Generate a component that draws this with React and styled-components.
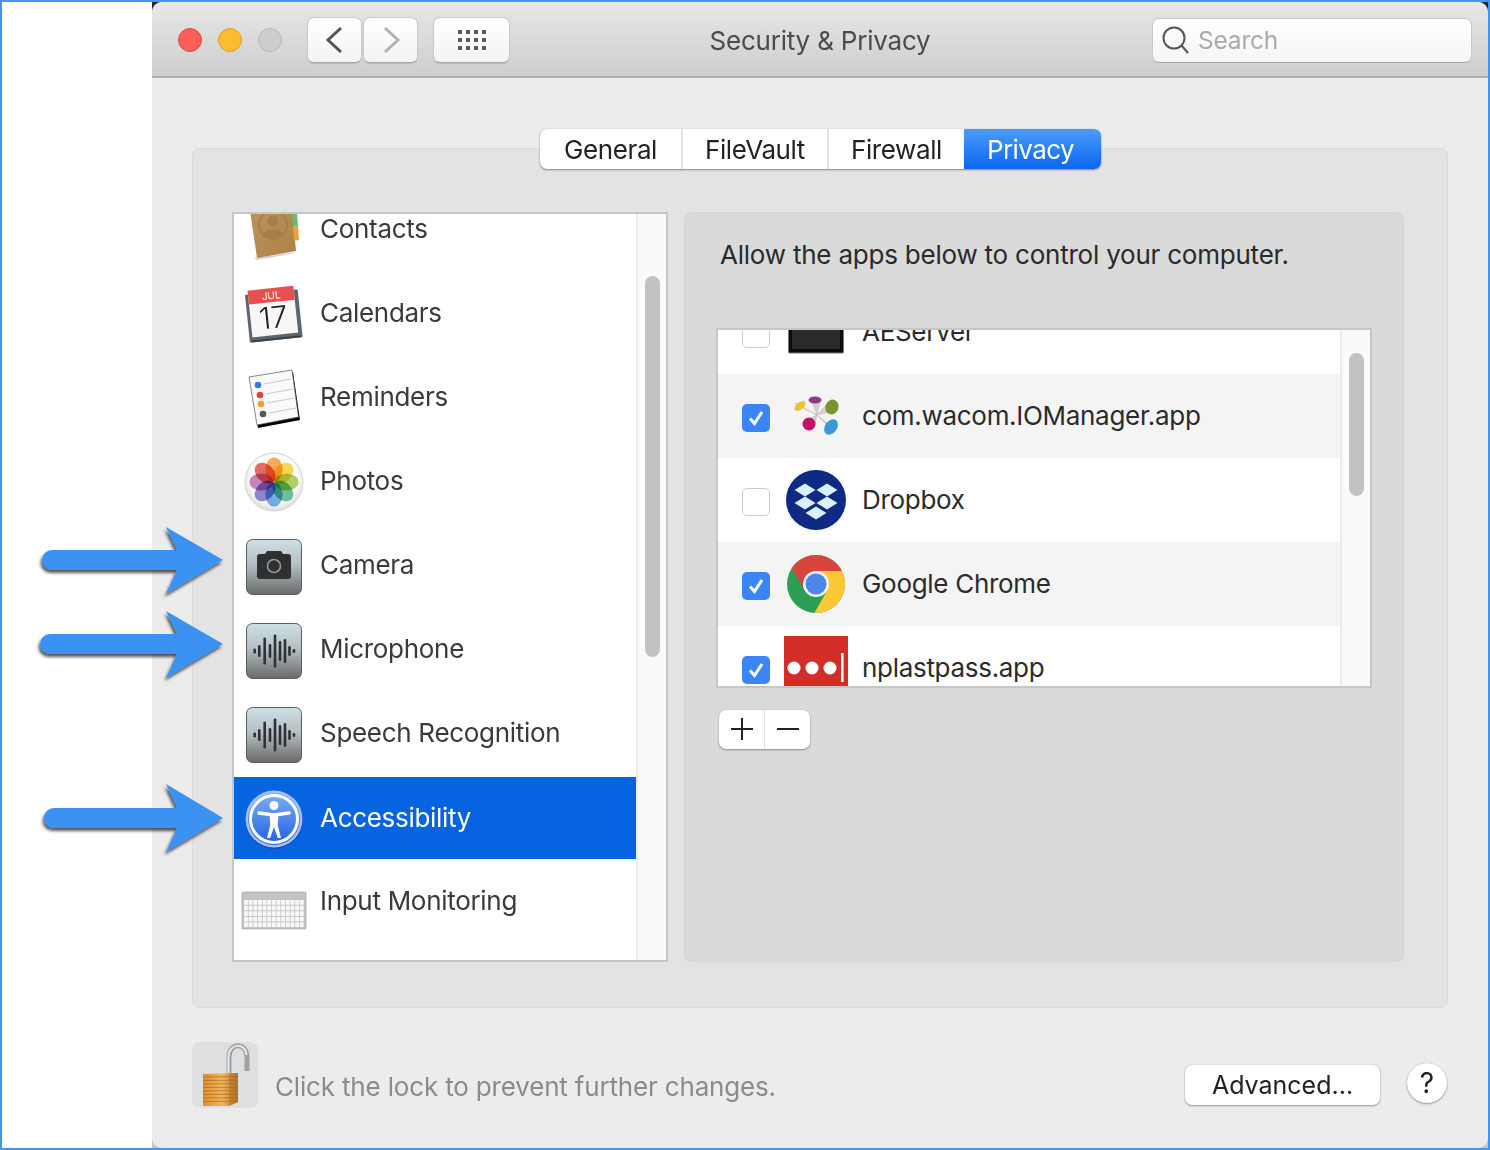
import React from 'react';
import styled, { createGlobalStyle } from 'styled-components';

const Global = createGlobalStyle`
  html, body { margin: 0; padding: 0; background: #fff; }
  * { box-sizing: border-box; }
  body { font-family: Inter, "Liberation Sans", sans-serif; }
`;

const Frame = styled.div`
  position: relative; width: 1490px; height: 1150px; border: 2px solid #3e96f5;
  display: flex; background: #fff; overflow: hidden;
`;
const Gutter = styled.div`width: 150px; flex: none;`;
const WindowBack = styled.div`
  flex: 1; background: linear-gradient(#1c2a40 0, #1c2a40 30px, #c4c4c4 31px);
`;
const Win = styled.div`
  height: 100%; background: #ececec; border-radius: 10px; overflow: hidden;
  display: flex; flex-direction: column;
`;
const TitleBar = styled.header`
  flex: none; height: 76px; display: grid; grid-template-columns: 1fr auto 1fr; align-items: center;
  background: linear-gradient(#e7e7e7, #cecece); border-bottom: 2px solid #aeaeae; padding: 2px 16px 0;
`;
const TitleLeft = styled.div`display: flex; align-items: center; padding-left: 10px;`;
const TitleRight = styled.div`display: flex; justify-content: flex-end;`;
const Title = styled.h1`margin: 2px 0 0; font-size: 26px; font-weight: 400; color: #4b4b4b; line-height: 30px; letter-spacing: -0.2px;`;
const Light = styled.span`
  width: 24px; height: 24px; border-radius: 50%; margin-right: 16px; background: ${p => p.$c}; border: 1px solid ${p => p.$b};
`;
const ToolButton = styled.div`
  width: ${p => p.$w}px; height: 46px; margin-left: ${p => p.$ml}px; display: flex; align-items: center; justify-content: center;
  background: linear-gradient(#fff, #f3f3f3); border-radius: 7px; border: 1px solid #c9c9c9; border-bottom-color: #a8a8a8;
  box-shadow: 0 1px 1px rgba(0,0,0,.12);
`;
const SearchField = styled.div`
  width: 320px; height: 45px; display: flex; align-items: center; padding-left: 9px; gap: 8px;
  background: linear-gradient(#fff, #f5f5f5); border-radius: 7px; border: 1px solid #c9c9c9; border-bottom-color: #a6a6a6;
  font-size: 24.5px; letter-spacing: -0.2px; color: #ababab;
`;
const Body = styled.main`flex: 1; padding: 70px 40px 0; display: flex; flex-direction: column;`;
const Panel = styled.section`
  height: 860px; background: #e3e3e3; border: 1px solid #dcdcdc; border-radius: 7px;
  display: flex; flex-direction: column;
`;
const Tabs = styled.nav`
  align-self: center; margin: -20px 0 0 1px; display: flex; height: 40px; background: #fff; border-radius: 7px;
  box-shadow: 0 1px 2px rgba(0,0,0,.4), 0 0 1px rgba(0,0,0,.25);
`;
const Tab = styled.div`
  width: ${p => p.$w}px; display: flex; align-items: center; justify-content: center; font-size: 26px; letter-spacing: -0.4px; color: #222;
  border-right: ${p => p.$sep ? '2px solid #e2e2e2' : 'none'};
  ${p => p.$on && `background: linear-gradient(#4d9bf9, #0b66f2); color: #fff; border-radius: 0 7px 7px 0; padding-right: 4px; letter-spacing: -0.6px;`}
`;
const Columns = styled.div`display: flex; gap: 16px; margin: 43px 0 0 39px; height: 750px;`;
const ListBox = styled.div`
  width: 436px; height: 750px; border: 2px solid #c6c6c6; background: #fff; display: flex; overflow: hidden;
`;
const ListScroll = styled.div`flex: 1; min-width: 0; overflow: hidden;`;
const ListInner = styled.div`margin-top: ${p => p.$top}px;`;
const Track = styled.div`
  flex: none; width: 30px; background: #fafafa; border-left: 2px solid #ececec; padding: ${p => p.$top}px 6px 0 7px;
`;
const Thumb = styled.div`height: ${p => p.$h}px; background: #c2c2c2; border-radius: 8px;`;
const CatRow = styled.div`
  height: 84px; display: flex; align-items: center; font-size: 26px; color: ${p => p.$on ? '#fff' : '#3a3a3a'};
  ${p => p.$on && `background: #0764e1; background-clip: padding-box; border-top: 2px solid transparent;`}
`;
const CatSlot = styled.div`
  width: 80px; height: 66px; flex: none; margin-right: 6px; display: flex; justify-content: center;
  ${p => p.$shift && `position: relative; top: -1px;`}
`;
const RowLabel = styled.span`margin-top: -2px; letter-spacing: -0.3px;`;
const RightPane = styled.div`
  width: 720px; height: 750px; background: #dadada; border-radius: 7px; border: 1px solid #d6d6d6; padding: 27px 0 0 31px;
`;
const PaneText = styled.p`margin: 0 0 0 4px; font-size: 26px; line-height: 30px; letter-spacing: -0.22px; color: #2a2a2a;`;
const AppBox = styled.div`
  width: 656px; height: 360px; margin-top: 58px; border: 2px solid #c6c6c6; background: #fff; display: flex; overflow: hidden;
`;
const AppRow = styled.div`
  height: 84px; display: flex; align-items: center; font-size: 26px; color: #2b2b2b;
  background: ${p => p.$alt ? '#f4f4f4' : '#fff'}; padding-left: 24px;
`;
const Check = styled.span`
  width: 28px; height: 28px; flex: none; margin-top: 4px; border-radius: 5px; display: flex; align-items: center; justify-content: center;
  background: ${p => p.$on ? '#3b86f7' : '#fff'}; border: ${p => p.$on ? 'none' : '1.5px solid #cdcdcd'};
`;
const AppSlot = styled.div`width: 66px; height: 66px; flex: none; margin: 0 12px 0 14px;`;
const PlusMinus = styled.div`
  width: 91px; height: 39px; margin: 22px 0 0 3px; display: flex; background: #fff; border-radius: 7px;
  box-shadow: 0 1px 2px rgba(0,0,0,.35), 0 0 1px rgba(0,0,0,.2);
`;
const PMCell = styled.div`
  flex: 1; display: flex; align-items: center; justify-content: center; padding-bottom: 2px;
  border-right: ${p => p.$sep ? '1.5px solid #dedede' : 'none'};
`;
const Footer = styled.footer`display: flex; align-items: flex-start; margin-top: 34px;`;
const LockTile = styled.div`width: 66px; height: 66px; background: #dfdfdf; border-radius: 8px; flex: none;`;
const LockText = styled.div`margin: 30px 0 0 17px; font-size: 26px; line-height: 30px; letter-spacing: -0.17px; color: #8b8b8b;`;
const Advanced = styled.div`
  margin: 23px 0 0 auto; width: 195px; height: 40px; background: #fff; border-radius: 7px; font-size: 25px; color: #222;
  display: flex; align-items: center; justify-content: center;
  box-shadow: 0 1px 2px rgba(0,0,0,.35), 0 0 1px rgba(0,0,0,.25);
`;
const Help = styled.div`
  margin: 21px 1px 0 27px; width: 40px; height: 40px; border-radius: 50%; background: #fff; font-size: 28px; color: #222;
  display: flex; align-items: center; justify-content: center;
  box-shadow: 0 1px 2px rgba(0,0,0,.35), 0 0 1px rgba(0,0,0,.25);
`;
const ArrowMark = styled.svg`position: absolute; left: 0; top: 0; pointer-events: none;`;

const S66 = ({ children }) => <svg width="66" height="66" viewBox="0 0 66 66">{children}</svg>;

const Contacts = () => (
  <S66>
    <defs><linearGradient id="bk" x1="0" y1="0" x2="1" y2="1"><stop offset="0" stopColor="#bd9563" /><stop offset="1" stopColor="#ad8145" /></linearGradient></defs>
    <polygon points="50,58 16,64 13,62 55,56" fill="#000" opacity=".18" />
    <polygon points="8,8 50,3 55,55 16,62" fill="url(#bk)" />
    <polygon points="50,6 55,5 56,17 51,18" fill="#5aa9d8" />
    <polygon points="51,18 56,17 57,30 52,31" fill="#6dbb6a" />
    <polygon points="52,31 57,30 58,44 53,45" fill="#e0a53a" />
    <circle cx="32" cy="29" r="14" fill="none" stroke="#a67d4c" strokeWidth="2" />
    <circle cx="32" cy="25" r="5.5" fill="#a67d4c" />
    <path d="M21 39c3-7 19-7 22 0c-5 5-17 5-22 0z" fill="#a67d4c" />
  </S66>
);
const Calendar = () => (
  <S66>
    <g transform="rotate(-6 33 33)">
      <rect x="6" y="12" width="53" height="48" rx="1" fill="#5b6670" />
      <rect x="8" y="58" width="49" height="2" fill="#3a424a" />
      <rect x="9" y="8" width="46" height="47" fill="#f7f7f7" />
      <rect x="9" y="8" width="46" height="14" fill="#e8504f" />
      <text x="32" y="19" fontSize="10" fill="#fff" textAnchor="middle" fontFamily="Inter, sans-serif">JUL</text>
      <text x="32" y="48" fontSize="30" fill="#222" textAnchor="middle" fontFamily="Inter, sans-serif" fontWeight="300">17</text>
    </g>
  </S66>
);
const Reminders = () => (
  <S66>
    <polygon points="9,15 52,8 59,56 17,64" fill="#000" />
    <polygon points="8,13 51,6 57.5,53 16,61" fill="#fafafa" stroke="#555" strokeWidth=".7" strokeLinejoin="round" />
    {[[17, 21, '#3478f0'], [19, 31, '#e5423a'], [20, 40, '#f2a030'], [22, 50, '#55565a']].map(([x, y, c]) => (
      <g key={y}>
        <line x1={x + 6} y1={y - 1} x2={x + 33} y2={y - 6} stroke="#c9c9c9" strokeWidth="1" />
        <circle cx={x} cy={y} r="3.3" fill={c} />
      </g>
    ))}
  </S66>
);
const Photos = () => {
  const colors = ['#f7a13a', '#f8d63c', '#a6cf4a', '#55b98a', '#5aa3df', '#7d74c4', '#c36fb4', '#e8534f'];
  return (
    <S66>
      <defs><radialGradient id="ph" cx=".5" cy=".45" r=".6"><stop offset=".7" stopColor="#fafafa" /><stop offset="1" stopColor="#cfcfcf" /></radialGradient></defs>
      <circle cx="33" cy="34" r="29" fill="url(#ph)" stroke="#d4d4d4" strokeWidth="1" />
      {colors.map((c, i) => (
        <ellipse key={c} cx="33" cy="21.5" rx="8.6" ry="12" fill={c} opacity=".85" transform={`rotate(${i * 45} 33 34)`} style={{ mixBlendMode: 'multiply' }} />
      ))}
    </S66>
  );
};
const TileBg = ({ id }) => (
  <>
    <defs><linearGradient id={id} x1="0" y1="0" x2="0" y2="1"><stop offset="0" stopColor="#cde0e6" /><stop offset=".45" stopColor="#b5c0c2" /><stop offset="1" stopColor="#696969" /></linearGradient></defs>
    <rect x="5.5" y="7.5" width="55" height="55" rx="6" fill={`url(#${id})`} stroke="#5c5c5c" />
  </>
);
const Camera = () => (
  <S66>
    <TileBg id="cam" />
    <path d="M16 25q0-3 3-3h5l2-3h14l2 3h5q3 0 3 3v19q0 3-3 3H19q-3 0-3-3z" fill="#2f3032" />
    <circle cx="33" cy="34" r="6.5" fill="none" stroke="#9a9a9a" strokeWidth="1.6" />
  </S66>
);
const waveBars = [[13.7, 5], [18.3, 12], [23.7, 27], [29, 14], [34, 33], [39, 20], [44, 24], [48.5, 10], [53, 4]];
const Wave = ({ id }) => (
  <S66>
    <TileBg id={id} />
    {waveBars.map(([x, h]) => <rect key={x} x={x - 1.3} y={35 - h / 2} width="2.6" height={h} rx="1.3" fill="#2e3236" />)}
  </S66>
);
const Access = () => (
  <S66>
    <defs><linearGradient id="ac" x1="0" y1="0" x2="0" y2="1"><stop offset="0" stopColor="#7fb0f8" /><stop offset="1" stopColor="#1f5fe0" /></linearGradient></defs>
    <circle cx="33" cy="36" r="29" fill="#1a49b8" />
    <circle cx="33" cy="35" r="28.5" fill="#9fc1f3" />
    <circle cx="33" cy="35" r="26" fill="url(#ac)" />
    <circle cx="33" cy="35" r="23.5" fill="none" stroke="#fff" strokeWidth="3" />
    <circle cx="33" cy="21.5" r="4.5" fill="#fff" />
    <path d="M18 29 L33 31 L48 29" stroke="#fff" strokeWidth="3.6" strokeLinecap="round" fill="none" />
    <path d="M28.5 30 h9 l-.8 11 L40 54 h-3.2 L33 43 L29.2 54 H26 l3.3-13z" fill="#fff" />
  </S66>
);
const Keyboard = () => (
  <S66>
    <rect x="1" y="24" width="64" height="37" rx="1" fill="#c4c4c4" stroke="#a0a0a0" strokeWidth=".6" />
    <rect x="2" y="31" width="62" height="29" fill="#c2c2c2" />
    {[0, 1, 2, 3, 4].map(r => (
      <g key={r}>
        {Array.from({ length: 13 }).map((_, c) => (
          <rect key={c} x={3 + c * 4.65} y={32 + r * 5.6} width="3.9" height="4.7" fill="#f8f8f8" />
        ))}
      </g>
    ))}
  </S66>
);
const AEServer = () => (
  <S66>
    <rect x="4.5" y="0" width="55" height="54" rx="1" fill="#0c0c0c" stroke="#7a7a7a" />
    <rect x="8" y="0" width="48" height="50" fill="#2a2a2a" />
  </S66>
);
const Wacom = () => (
  <S66>
    {[[16, 23], [31, 17], [48, 24], [25, 41], [47, 44]].map(([x, y]) => (
      <polygon key={x} points={`33,32 ${x - 5},${y - 3} ${x + 5},${y + 3}`} fill="#d6d0ca" stroke="#b7b0aa" strokeWidth=".5" />
    ))}
    <ellipse cx="16" cy="23" rx="3.5" ry="6.5" transform="rotate(50 16 23)" fill="#e7c52b" />
    <ellipse cx="31" cy="17" rx="6.5" ry="3.5" fill="#8c3b87" />
    <ellipse cx="48" cy="24" rx="6.5" ry="7.5" transform="rotate(20 48 24)" fill="#78962f" />
    <circle cx="25" cy="41" r="6.5" fill="#c5116a" />
    <ellipse cx="47" cy="44" rx="6" ry="8.5" transform="rotate(35 47 44)" fill="#3b9ad6" />
  </S66>
);
const Diamond = ({ x, y }) => <polygon points={`${x - 10.5},${y} ${x},${y - 6.5} ${x + 10.5},${y} ${x},${y + 6.5}`} fill="#d8f0ff" />;
const Dropbox = () => (
  <S66>
    <circle cx="32" cy="33" r="30" fill="#0f2a83" />
    <Diamond x={21} y={23} /><Diamond x={43} y={23} /><Diamond x={21} y={36} /><Diamond x={43} y={36} /><Diamond x={32} y={46} />
  </S66>
);
const Chrome = () => (
  <S66>
    <defs><clipPath id="cc"><circle cx="33" cy="33" r="29" /></clipPath></defs>
    <g transform="translate(-1 0)">
      <g clipPath="url(#cc)">
        <rect width="66" height="66" fill="#2f9e55" />
        <polygon points="33,20 70,20 70,70 26.7,70 44.3,39.5" fill="#fbc933" />
        <polygon points="21.7,39.5 5,10.6 5,-5 70,-5 70,20 33,20" fill="#d9453c" />
      </g>
      <circle cx="33" cy="33" r="13" fill="#f4f4f4" />
      <circle cx="33" cy="33" r="10.5" fill="#4f88ec" />
    </g>
  </S66>
);
const LastPass = () => (
  <S66>
    <rect x="0" y="1" width="64" height="64" fill="#d32d27" />
    <circle cx="10" cy="33" r="6.5" fill="#fff" /><circle cx="28" cy="33" r="6.5" fill="#fff" /><circle cx="46" cy="33" r="6.5" fill="#fff" />
    <rect x="57" y="18" width="2.6" height="29" fill="#fff" />
  </S66>
);
const Lock = () => (
  <svg width="66" height="66" viewBox="0 0 66 66">
    <defs>
      <linearGradient id="lk" x1="0" y1="0" x2="1" y2="0"><stop offset="0" stopColor="#dd8f2e" /><stop offset=".55" stopColor="#f1b65e" /><stop offset="1" stopColor="#b86e1e" /></linearGradient>
    </defs>
    <path d="M37 32V15c0-15 18-15 18 0v14" fill="none" stroke="#9aa2a8" strokeWidth="5" />
    <path d="M36.5 32V15c0-14 17-15 18-2" fill="none" stroke="#e4e8ea" strokeWidth="2" />
    <path d="M11 32l35-1v29l-9 4H11z" fill="url(#lk)" />
    <path d="M37 31.5v32.5l9-4V31z" fill="#b87524" opacity=".5" />
    {[35, 38.5, 42, 45.5, 49, 52.5, 56, 59.5].map(y => <line key={y} x1="11" x2="46" y1={y} y2={y - .3} stroke="#a8651c" strokeWidth=".9" opacity=".75" />)}
  </svg>
);

const Arrow = ({ l, y, top, bot }) => (
  <path filter="url(#ash)" d={`M${l + 10} ${y - 10} H175 L164 ${top} L221 ${y} L164 ${bot} L175 ${y + 10} H${l + 10} a10 10 0 0 1 0 -20z`} fill="#3a92f3" />
);

const cats = [
  ['Contacts', Contacts], ['Calendars', Calendar], ['Reminders', Reminders], ['Photos', Photos],
  ['Camera', Camera], ['Microphone', () => <Wave id="w1" />], ['Speech Recognition', () => <Wave id="w2" />],
  ['Accessibility', Access, true], ['Input Monitoring', Keyboard],
];
const apps = [
  ['AEServer', AEServer, false, false], ['com.wacom.IOManager.app', Wacom, true, true], ['Dropbox', Dropbox, false, false],
  ['Google Chrome', Chrome, true, true], ['nplastpass.app', LastPass, true, false],
];

export default function App() {
  return (
    <>
      <Global />
      <Frame>
        <Gutter />
        <WindowBack>
          <Win>
            <TitleBar>
              <TitleLeft>
                <Light $c="#fc5f57" $b="#df4a43" />
                <Light $c="#fdbc2e" $b="#dea123" />
                <Light $c="#cdcdcd" $b="#b9b9b9" />
                <ToolButton $w={55} $ml={9}>
                  <svg width="20" height="28" viewBox="0 0 20 28"><path d="M16 2L3 14l13 12" fill="none" stroke="#555" strokeWidth="3" /></svg>
                </ToolButton>
                <ToolButton $w={55} $ml={1}>
                  <svg width="20" height="28" viewBox="0 0 20 28"><path d="M4 2l13 12L4 26" fill="none" stroke="#b2b2b2" strokeWidth="3" /></svg>
                </ToolButton>
                <ToolButton $w={77} $ml={15}>
                  <svg width="30" height="20" viewBox="0 0 30 20" fill="#5a5a5a">
                    {[0, 8, 16].map(y => [1, 9, 17, 25].map(x => <rect key={`${x}-${y}`} x={x} y={y} width="4" height="4" />))}
                  </svg>
                </ToolButton>
              </TitleLeft>
              <Title>Security &amp; Privacy</Title>
              <TitleRight>
                <SearchField>
                  <svg width="28" height="30" viewBox="0 0 28 30"><circle cx="12" cy="13" r="10.5" fill="none" stroke="#555" strokeWidth="2" /><path d="M19.5 20.5L26 28" stroke="#555" strokeWidth="2" /></svg>
                  Search
                </SearchField>
              </TitleRight>
            </TitleBar>
            <Body>
              <Panel>
                <Tabs>
                  <Tab $w={143} $sep>General</Tab>
                  <Tab $w={146} $sep>FileVault</Tab>
                  <Tab $w={135}>Firewall</Tab>
                  <Tab $w={137} $on>Privacy</Tab>
                </Tabs>
                <Columns>
                  <ListBox>
                    <ListScroll>
                      <ListInner $top={-27}>
                        {cats.map(([name, Icon, on]) => (
                          <CatRow key={name} $on={on}>
                            <CatSlot $shift={on}><Icon /></CatSlot>
                            <RowLabel>{name}</RowLabel>
                          </CatRow>
                        ))}
                      </ListInner>
                    </ListScroll>
                    <Track $top={62}><Thumb $h={381} /></Track>
                  </ListBox>
                  <RightPane>
                    <PaneText>Allow the apps below to control your computer.</PaneText>
                    <AppBox>
                      <ListScroll>
                        <ListInner $top={-40}>
                          {apps.map(([name, Icon, on, alt]) => (
                            <AppRow key={name} $alt={alt}>
                              <Check $on={on}>
                                {on && <svg width="20" height="20" viewBox="0 0 20 20"><path d="M4 10.5l4.5 5L16 4" fill="none" stroke="#fff" strokeWidth="3" /></svg>}
                              </Check>
                              <AppSlot><Icon /></AppSlot>
                              <RowLabel>{name}</RowLabel>
                            </AppRow>
                          ))}
                        </ListInner>
                      </ListScroll>
                      <Track $top={23}><Thumb $h={143} /></Track>
                    </AppBox>
                    <PlusMinus>
                      <PMCell $sep>
                        <svg width="24" height="24" viewBox="0 0 24 24"><path d="M12 1v22M1 12h22" stroke="#222" strokeWidth="2" /></svg>
                      </PMCell>
                      <PMCell>
                        <svg width="24" height="24" viewBox="0 0 24 24"><path d="M1 12h22" stroke="#222" strokeWidth="2" /></svg>
                      </PMCell>
                    </PlusMinus>
                  </RightPane>
                </Columns>
              </Panel>
              <Footer>
                <LockTile><Lock /></LockTile>
                <LockText>Click the lock to prevent further changes.</LockText>
                <Advanced>Advanced...</Advanced>
                <Help>?</Help>
              </Footer>
            </Body>
          </Win>
        </WindowBack>
        <ArrowMark width="240" height="900">
          <defs>
            <filter id="ash" x="-20%" y="-30%" width="140%" height="160%">
              <feDropShadow dx="-1.5" dy="3" stdDeviation="1.8" floodColor="#000" floodOpacity=".65" />
            </filter>
          </defs>
          <Arrow l={40} y={558} top={525} bot={592} />
          <Arrow l={38} y={642} top={609} bot={676} />
          <Arrow l={42} y={816} top={782} bot={850} />
        </ArrowMark>
      </Frame>
    </>
  );
}
